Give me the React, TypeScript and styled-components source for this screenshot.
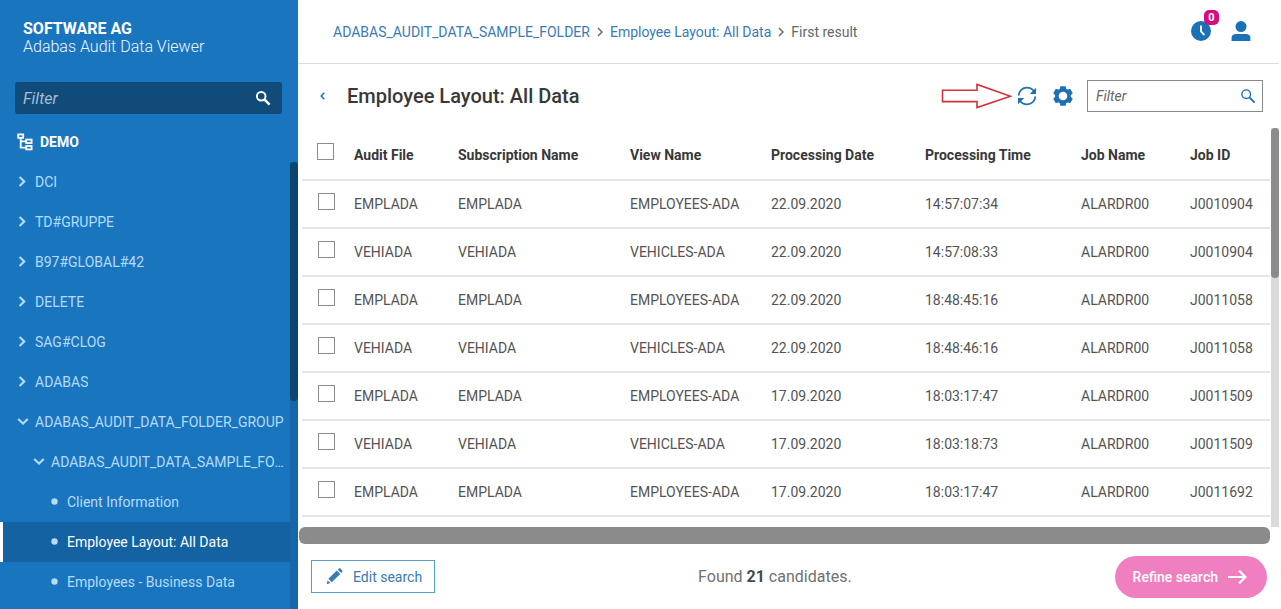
import React from "react";
import styled, { createGlobalStyle, css } from "styled-components";

const color = {
  brand: "#1a75bf",
  brandDark: "#104b7a",
  brandSelected: "#1462a1",
  pale: "#b4dcfa",
  link: "#3a7ab5",
  icon: "#1c70b5",
  text: "#383838",
  cell: "#545454",
  line: "#e6e6e6",
  thumb: "#8b8b8b",
  pink: "#f07fc0",
};

const GlobalStyle = createGlobalStyle`
  *, *::before, *::after { box-sizing: border-box; }
  body {
    margin: 0;
    font-family: Roboto, "Liberation Sans", sans-serif;
    font-size: 14px;
    color: ${color.text};
    background: #fff;
  }
  button, input { font: inherit; }
  svg { display: block; flex: none; }
`;

const Shell = styled.div`
  display: grid;
  grid-template-columns: 298px minmax(0, 1fr);
  height: 100vh;
  overflow: hidden;
`;

const Sidebar = styled.aside`
  display: flex;
  flex-direction: column;
  min-height: 0;
  background: ${color.brand};
  color: #fff;
`;

const Brand = styled.header`
  padding: 20px 23px 26px;
  font-size: 16px;
  font-weight: 300;
  line-height: 18px;
  color: #eef8ff;
`;

const BrandName = styled.strong`
  display: block;
  font-weight: 700;
  color: #fff;
`;

const FilterBox = styled.label<{ $dark?: boolean }>`
  display: flex;
  align-items: center;
  height: 32px;
  ${(p) =>
    p.$dark
      ? css`
          margin: 0 16px 0 15px;
          padding: 0 11px 0 8px;
          border-radius: 3px;
          background: ${color.brandDark};
          color: #fff;
          font-size: 16px;
        `
      : css`
          width: 176px;
          padding: 0 6px 0 8px;
          border: 1px solid #8a8a8a;
          color: ${color.icon};
        `}
`;

const FilterInput = styled.input<{ $hint: string }>`
  flex: 1;
  min-width: 0;
  padding: 0;
  border: 0;
  outline: 0;
  background: none;
  color: inherit;
  &::placeholder {
    font-style: italic;
    color: ${(p) => p.$hint};
    opacity: 1;
  }
`;

const Root = styled.h2`
  display: flex;
  align-items: center;
  gap: 7px;
  height: 40px;
  margin: 8px 0 0;
  padding-left: 17px;
  font-size: 14px;
  font-weight: 700;
`;

const TreeArea = styled.div`
  display: flex;
  flex: 1;
  min-height: 0;
`;

const Tree = styled.ul`
  flex: 1;
  min-width: 0;
  margin: 0;
  padding: 0;
  overflow: hidden;
  list-style: none;
`;

const TreeItem = styled.button<{ $level: number; $selected?: boolean }>`
  display: flex;
  align-items: center;
  gap: 6px;
  width: 100%;
  height: 40px;
  padding: 0 6px 0 ${(p) => 13 + p.$level * 16}px;
  border: 0;
  border-left: 3px solid ${(p) => (p.$selected ? "#fff" : "transparent")};
  background: ${(p) => (p.$selected ? color.brandSelected : "transparent")};
  background-clip: padding-box;
  color: ${(p) => (p.$selected ? "#fff" : color.pale)};
  text-align: left;
  cursor: pointer;
`;

const TreeLabel = styled.span`
  overflow: hidden;
  text-overflow: ellipsis;
  white-space: nowrap;
`;

const Marker = styled.span`
  display: flex;
  flex: none;
  justify-content: center;
  width: 13px;
  padding-bottom: 1px;
  color: ${color.pale};
`;

const SideTrack = styled.div`
  width: 8px;
  background: #1667a8;
`;

const SideThumb = styled.div`
  height: 239px;
  border-radius: 4px;
  background: #0e4570;
`;

const Main = styled.main`
  display: flex;
  flex-direction: column;
  min-width: 0;
  min-height: 0;
  padding-right: 2px;
`;

const TopBar = styled.header`
  display: flex;
  align-items: center;
  justify-content: space-between;
  height: 64px;
  padding: 0 28px 0 35px;
  border-bottom: 1px solid #dcdcdc;
`;

const Crumbs = styled.nav`
  display: flex;
  align-items: center;
  gap: 7px;
  color: #666;
`;

const CrumbLink = styled.a`
  color: ${color.link};
  text-decoration: none;
`;

const TopActions = styled.div`
  display: flex;
  gap: 20px;
  padding-bottom: 2px;
`;

const IconButton = styled.button`
  position: relative;
  padding: 0;
  border: 0;
  background: none;
  color: ${color.icon};
  cursor: pointer;
`;

const Badge = styled.span`
  position: absolute;
  top: -11px;
  right: -8px;
  width: 15px;
  border-radius: 5px;
  background: #d2107c;
  color: #fff;
  font-size: 11px;
  font-weight: 700;
  line-height: 15px;
  text-align: center;
`;

const TitleBar = styled.div`
  display: flex;
  align-items: center;
  height: 64px;
  padding: 0 16px 0 22px;
`;

const Title = styled.h1`
  flex: 1;
  margin: 0;
  padding-left: 22px;
  font-size: 20px;
  font-weight: 500;
`;

const Tools = styled.div`
  display: flex;
  align-items: center;
  gap: 14px;
`;

const RefreshGroup = styled.div`
  display: flex;
  align-items: center;
  gap: 5px;
  padding-right: 2px;
`;

const Results = styled.section`
  display: flex;
  flex: 1;
  min-height: 0;
`;

const TableView = styled.div`
  flex: 1;
  min-width: 0;
  padding: 0 1px 0 4px;
  overflow: hidden;
`;

const Table = styled.table`
  width: 100%;
  table-layout: fixed;
  border-collapse: collapse;
`;

const cell = css`
  padding: 0 8px;
  border-bottom: 2px solid ${color.line};
  text-align: left;
  white-space: nowrap;
`;

const HeadCell = styled.th<{ $width: number }>`
  ${cell}
  width: ${(p) => p.$width}px;
  height: 52px;
  padding-top: 2px;
  font-weight: 700;
`;

const Cell = styled.td`
  ${cell}
  height: 48px;
  color: ${color.cell};
`;

const CheckBox = styled.input`
  display: block;
  width: 17px;
  height: 17px;
  margin: 0 0 6px 7px;
  appearance: none;
  border: 1px solid #8c8c8c;
  background: #fff;
  td & {
    margin-left: 8px;
  }
  &:checked {
    background: ${color.icon};
  }
`;

const MainTrack = styled.div`
  width: 8px;
  background: #dadada;
`;

const MainThumb = styled.div`
  height: 150px;
  border-radius: 4px;
  background: ${color.thumb};
`;

const BottomThumb = styled.div`
  height: 17px;
  margin: 0 9px 0 1px;
  border-radius: 6px;
  background: ${color.thumb};
`;

const Footer = styled.footer`
  display: flex;
  align-items: center;
  justify-content: space-between;
  height: 65px;
  padding: 0 12px 0 13px;
`;

const EditButton = styled.button`
  display: flex;
  align-items: center;
  gap: 10px;
  height: 33px;
  padding: 0 12px 0 14px;
  border: 1px solid #5b9bc8;
  background: #fff;
  color: ${color.link};
  cursor: pointer;
`;

const Found = styled.p`
  margin: 0;
  font-size: 16px;
  color: #707070;
  b {
    color: #4a4a4a;
  }
`;

const RefineButton = styled.button`
  display: flex;
  align-items: center;
  gap: 10px;
  height: 42px;
  padding: 0 20px 0 18px;
  border: 0;
  border-radius: 21px;
  background: ${color.pink};
  color: #fff;
  font-weight: 500;
  cursor: pointer;
`;

const SearchIcon = ({ weight }: { weight: number }) => (
  <svg width="16" height="16" viewBox="0 0 16 16" fill="none" stroke="currentColor" strokeWidth={weight}>
    <circle cx="6.2" cy="6.2" r="4.3" />
    <path d="M9.4 9.4 L14.6 14.6" strokeWidth={weight + 0.5} />
  </svg>
);

const ChevronRight = () => (
  <svg width="9" height="12" viewBox="0 0 9 12" fill="none" stroke="currentColor" strokeWidth="2.2">
    <path d="M1.6 1 L6.2 5.5 L1.6 10" />
  </svg>
);

const ChevronDown = () => (
  <svg width="12" height="9" viewBox="0 0 12 9" fill="none" stroke="currentColor" strokeWidth="2.2">
    <path d="M1.2 2 L6 6.5 L10.8 2" />
  </svg>
);

const Dot = () => (
  <svg width="7" height="7" viewBox="0 0 7 7" fill="currentColor">
    <circle cx="3.5" cy="3.5" r="3.2" />
  </svg>
);

const CrumbArrow = () => (
  <svg width="6" height="10" viewBox="0 0 6 10" fill="none" stroke="currentColor" strokeWidth="1.5">
    <path d="M1 1 L5 5 L1 9" />
  </svg>
);

const HierarchyIcon = () => (
  <svg width="16" height="18" viewBox="0 0 16 18" fill="none" stroke="currentColor" strokeWidth="1.8">
    <rect x="1.2" y="1.4" width="5" height="3.4" />
    <rect x="9.2" y="6.6" width="5.4" height="3.4" />
    <rect x="9.2" y="13" width="5.4" height="3.4" />
    <path d="M3.7 5 V14.7 H9 M3.7 8.3 H9" />
  </svg>
);

const ClockIcon = () => (
  <svg width="20" height="20" viewBox="0 0 20 20">
    <circle cx="10" cy="10" r="10" fill="currentColor" />
    <path d="M10 4.6 V10.4 L13.4 14" fill="none" stroke="#fff" strokeWidth="1.9" />
  </svg>
);

const PersonIcon = () => (
  <svg width="20" height="20" viewBox="0 0 20 20" fill="currentColor">
    <circle cx="10" cy="5.6" r="5.5" />
    <path d="M0.6 20 V17 C0.6 14 2.6 13 5 13 H15 C17.4 13 19.4 14 19.4 17 V20 Z" />
  </svg>
);

const PointerArrow = () => (
  <svg width="71" height="26" viewBox="0 0 71 26" fill="none" stroke="#d3323a" strokeWidth="1.6">
    <path d="M1.5 7.2 H36 V1.5 L69.5 13.2 L36 24.6 V18.6 H1.5 Z" />
  </svg>
);

const RefreshIcon = () => (
  <svg width="20" height="20" viewBox="0 0 20 20" fill="none" stroke="currentColor" strokeWidth="1.7">
    <path d="M1.6 9.6 C1.8 4.8 5.6 1.6 10 1.6 C13 1.6 15.4 3 17 5.2" />
    <path d="M18.4 10.4 C18.2 15.2 14.4 18.4 10 18.4 C7 18.4 4.6 17 3 14.8" />
    <path d="M19 1.8 V8 H12.8 Z M1 18.2 V12 H7.2 Z" fill="currentColor" stroke="none" />
  </svg>
);

const GearIcon = () => (
  <svg width="20" height="20" viewBox="0 0 20 20">
    <g fill="currentColor">
      <circle cx="10" cy="10" r="7.8" />
      {[0, 60, 120].map((angle) => (
        <path
          key={angle}
          d="M7.4 0.2 H12.6 L13.4 4 V16 L12.6 19.8 H7.4 L6.6 16 V4 Z"
          transform={`rotate(${angle} 10 10)`}
        />
      ))}
    </g>
    <circle cx="10" cy="10" r="4.3" fill="#fff" />
  </svg>
);

const BackIcon = () => (
  <svg width="5" height="8" viewBox="0 0 5 8" fill="none" stroke="currentColor" strokeWidth="1.5">
    <path d="M4.3 0.8 L1.2 4 L4.3 7.2" />
  </svg>
);

const PencilIcon = () => (
  <svg width="17" height="17" viewBox="0 0 17 17" fill="currentColor">
    <path d="M10.8 2.6 L14.2 6 L5.8 14.2 L2.4 10.8 Z" />
    <path d="M11.8 1.7 L13 0.6 C13.5 0.2 14 0.2 14.4 0.6 L16.2 2.4 C16.6 2.8 16.6 3.3 16.2 3.8 L15.2 5 Z" />
    <path d="M1.6 12.3 L4.4 15.1 L0.6 16.3 Z" />
  </svg>
);

const ArrowRight = () => (
  <svg width="19" height="16" viewBox="0 0 19 16" fill="none" stroke="currentColor" strokeWidth="2.2">
    <path d="M0 8 H17.2 M11 1.6 L17.4 8 L11 14.4" />
  </svg>
);

type Kind = "closed" | "open" | "leaf";

const markers: Record<Kind, () => React.ReactElement> = {
  closed: ChevronRight,
  open: ChevronDown,
  leaf: Dot,
};

const tree: { label: string; kind: Kind; level: number; selected?: boolean }[] = [
  { label: "DCI", kind: "closed", level: 0 },
  { label: "TD#GRUPPE", kind: "closed", level: 0 },
  { label: "B97#GLOBAL#42", kind: "closed", level: 0 },
  { label: "DELETE", kind: "closed", level: 0 },
  { label: "SAG#CLOG", kind: "closed", level: 0 },
  { label: "ADABAS", kind: "closed", level: 0 },
  { label: "ADABAS_AUDIT_DATA_FOLDER_GROUP", kind: "open", level: 0 },
  { label: "ADABAS_AUDIT_DATA_SAMPLE_FOLDER", kind: "open", level: 1 },
  { label: "Client Information", kind: "leaf", level: 2 },
  { label: "Employee Layout: All Data", kind: "leaf", level: 2, selected: true },
  { label: "Employees - Business Data", kind: "leaf", level: 2 },
];

const columns: [string, number][] = [
  ["Audit File", 104],
  ["Subscription Name", 172],
  ["View Name", 141],
  ["Processing Date", 154],
  ["Processing Time", 156],
  ["Job Name", 109],
  ["Job ID", 88],
];

const rows = [
  ["EMPLADA", "EMPLADA", "EMPLOYEES-ADA", "22.09.2020", "14:57:07:34", "ALARDR00", "J0010904"],
  ["VEHIADA", "VEHIADA", "VEHICLES-ADA", "22.09.2020", "14:57:08:33", "ALARDR00", "J0010904"],
  ["EMPLADA", "EMPLADA", "EMPLOYEES-ADA", "22.09.2020", "18:48:45:16", "ALARDR00", "J0011058"],
  ["VEHIADA", "VEHIADA", "VEHICLES-ADA", "22.09.2020", "18:48:46:16", "ALARDR00", "J0011058"],
  ["EMPLADA", "EMPLADA", "EMPLOYEES-ADA", "17.09.2020", "18:03:17:47", "ALARDR00", "J0011509"],
  ["VEHIADA", "VEHIADA", "VEHICLES-ADA", "17.09.2020", "18:03:18:73", "ALARDR00", "J0011509"],
  ["EMPLADA", "EMPLADA", "EMPLOYEES-ADA", "17.09.2020", "18:03:17:47", "ALARDR00", "J0011692"],
];

export default function App() {
  return (
    <Shell>
      <GlobalStyle />
      <Sidebar>
        <Brand>
          <BrandName>SOFTWARE AG</BrandName>
          Adabas Audit Data Viewer
        </Brand>
        <FilterBox $dark>
          <FilterInput $hint="#a3bfd6" placeholder="Filter" aria-label="Filter folders" />
          <SearchIcon weight={2} />
        </FilterBox>
        <Root>
          <HierarchyIcon />
          DEMO
        </Root>
        <TreeArea>
          <Tree>
            {tree.map(({ label, kind, level, selected }) => {
              const Icon = markers[kind];
              return (
                <li key={label}>
                  <TreeItem $level={level} $selected={selected}>
                    <Marker>
                      <Icon />
                    </Marker>
                    <TreeLabel>{label}</TreeLabel>
                  </TreeItem>
                </li>
              );
            })}
          </Tree>
          <SideTrack>
            <SideThumb />
          </SideTrack>
        </TreeArea>
      </Sidebar>

      <Main>
        <TopBar>
          <Crumbs aria-label="Breadcrumb">
            <CrumbLink href="#folder">ADABAS_AUDIT_DATA_SAMPLE_FOLDER</CrumbLink>
            <CrumbArrow />
            <CrumbLink href="#layout">Employee Layout: All Data</CrumbLink>
            <CrumbArrow />
            <span>First result</span>
          </Crumbs>
          <TopActions>
            <IconButton aria-label="Recent searches">
              <ClockIcon />
              <Badge>0</Badge>
            </IconButton>
            <IconButton aria-label="Account">
              <PersonIcon />
            </IconButton>
          </TopActions>
        </TopBar>

        <TitleBar>
          <IconButton aria-label="Back">
            <BackIcon />
          </IconButton>
          <Title>Employee Layout: All Data</Title>
          <Tools>
            <RefreshGroup>
              <PointerArrow />
              <IconButton aria-label="Refresh">
                <RefreshIcon />
              </IconButton>
            </RefreshGroup>
            <IconButton aria-label="Settings">
              <GearIcon />
            </IconButton>
            <FilterBox>
              <FilterInput $hint="#666" placeholder="Filter" aria-label="Filter results" />
              <SearchIcon weight={1.4} />
            </FilterBox>
          </Tools>
        </TitleBar>

        <Results>
          <TableView>
            <Table>
              <thead>
                <tr>
                  <HeadCell $width={44}>
                    <CheckBox type="checkbox" aria-label="Select all rows" />
                  </HeadCell>
                  {columns.map(([name, width]) => (
                    <HeadCell key={name} $width={width}>
                      {name}
                    </HeadCell>
                  ))}
                </tr>
              </thead>
              <tbody>
                {rows.map((row, r) => (
                  <tr key={r}>
                    <Cell>
                      <CheckBox type="checkbox" aria-label={`Select row ${r + 1}`} />
                    </Cell>
                    {row.map((value, c) => (
                      <Cell key={c}>{value}</Cell>
                    ))}
                  </tr>
                ))}
              </tbody>
            </Table>
          </TableView>
          <MainTrack>
            <MainThumb />
          </MainTrack>
        </Results>
        <BottomThumb />

        <Footer>
          <EditButton>
            <PencilIcon />
            Edit search
          </EditButton>
          <Found>
            Found <b>21</b> candidates.
          </Found>
          <RefineButton>
            Refine search
            <ArrowRight />
          </RefineButton>
        </Footer>
      </Main>
    </Shell>
  );
}
